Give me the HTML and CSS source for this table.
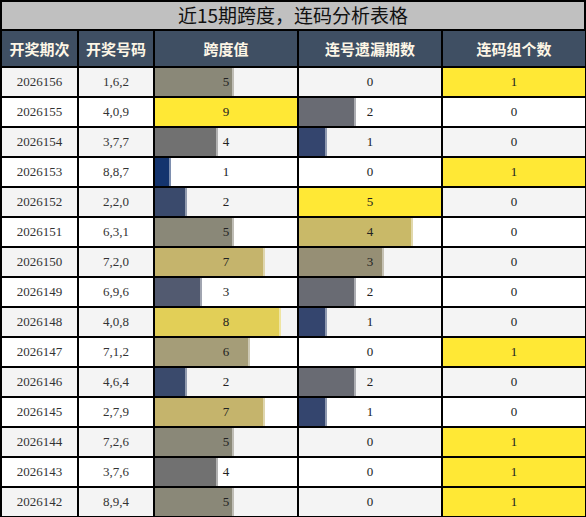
FILE: index.html
```html
<!DOCTYPE html>
<html lang="zh-CN">
<head>
  <meta charset="utf-8">
  <title>近15期跨度，连码分析表格</title>
  <link rel="stylesheet" href="styles.css">
</head>
<body>
  <div class="title">近15期跨度，连码分析表格</div>
  <table id="mainTable">
    <colgroup>
      <col class="c-issue">
      <col class="c-nums">
      <col class="c-bar">
      <col class="c-bar">
      <col class="c-bar">
    </colgroup>
    <thead>
      <tr>
        <th>开奖期次</th>
        <th>开奖号码</th>
        <th>跨度值</th>
        <th>连号遗漏期数</th>
        <th>连码组个数</th>
      </tr>
    </thead>
    <tbody>
      <tr>
        <td>2026156</td><td>1,6,2</td>
        <td class="barCell"><div class="bar s5" style="width:55.5%"></div><span class="val">5</span></td>
        <td class="barCell"><span class="val">0</span></td>
        <td class="barCell"><div class="bar hit" style="width:100%"></div><span class="val">1</span></td>
      </tr>
      <tr>
        <td>2026155</td><td>4,0,9</td>
        <td class="barCell"><div class="bar s9" style="width:100%"></div><span class="val">9</span></td>
        <td class="barCell"><div class="bar m2" style="width:40%"></div><span class="val">2</span></td>
        <td class="barCell"><span class="val">0</span></td>
      </tr>
      <tr>
        <td>2026154</td><td>3,7,7</td>
        <td class="barCell"><div class="bar s4" style="width:44.4%"></div><span class="val">4</span></td>
        <td class="barCell"><div class="bar m1" style="width:20%"></div><span class="val">1</span></td>
        <td class="barCell"><span class="val">0</span></td>
      </tr>
      <tr>
        <td>2026153</td><td>8,8,7</td>
        <td class="barCell"><div class="bar s1" style="width:11.1%"></div><span class="val">1</span></td>
        <td class="barCell"><span class="val">0</span></td>
        <td class="barCell"><div class="bar hit" style="width:100%"></div><span class="val">1</span></td>
      </tr>
      <tr>
        <td>2026152</td><td>2,2,0</td>
        <td class="barCell"><div class="bar s2" style="width:22.2%"></div><span class="val">2</span></td>
        <td class="barCell"><div class="bar m5" style="width:100%"></div><span class="val">5</span></td>
        <td class="barCell"><span class="val">0</span></td>
      </tr>
      <tr>
        <td>2026151</td><td>6,3,1</td>
        <td class="barCell"><div class="bar s5" style="width:55.5%"></div><span class="val">5</span></td>
        <td class="barCell"><div class="bar m4" style="width:80%"></div><span class="val">4</span></td>
        <td class="barCell"><span class="val">0</span></td>
      </tr>
      <tr>
        <td>2026150</td><td>7,2,0</td>
        <td class="barCell"><div class="bar s7" style="width:77.7%"></div><span class="val">7</span></td>
        <td class="barCell"><div class="bar m3" style="width:60%"></div><span class="val">3</span></td>
        <td class="barCell"><span class="val">0</span></td>
      </tr>
      <tr>
        <td>2026149</td><td>6,9,6</td>
        <td class="barCell"><div class="bar s3" style="width:33.3%"></div><span class="val">3</span></td>
        <td class="barCell"><div class="bar m2" style="width:40%"></div><span class="val">2</span></td>
        <td class="barCell"><span class="val">0</span></td>
      </tr>
      <tr>
        <td>2026148</td><td>4,0,8</td>
        <td class="barCell"><div class="bar s8" style="width:88.8%"></div><span class="val">8</span></td>
        <td class="barCell"><div class="bar m1" style="width:20%"></div><span class="val">1</span></td>
        <td class="barCell"><span class="val">0</span></td>
      </tr>
      <tr>
        <td>2026147</td><td>7,1,2</td>
        <td class="barCell"><div class="bar s6" style="width:66.6%"></div><span class="val">6</span></td>
        <td class="barCell"><span class="val">0</span></td>
        <td class="barCell"><div class="bar hit" style="width:100%"></div><span class="val">1</span></td>
      </tr>
      <tr>
        <td>2026146</td><td>4,6,4</td>
        <td class="barCell"><div class="bar s2" style="width:22.2%"></div><span class="val">2</span></td>
        <td class="barCell"><div class="bar m2" style="width:40%"></div><span class="val">2</span></td>
        <td class="barCell"><span class="val">0</span></td>
      </tr>
      <tr>
        <td>2026145</td><td>2,7,9</td>
        <td class="barCell"><div class="bar s7" style="width:77.7%"></div><span class="val">7</span></td>
        <td class="barCell"><div class="bar m1" style="width:20%"></div><span class="val">1</span></td>
        <td class="barCell"><span class="val">0</span></td>
      </tr>
      <tr>
        <td>2026144</td><td>7,2,6</td>
        <td class="barCell"><div class="bar s5" style="width:55.5%"></div><span class="val">5</span></td>
        <td class="barCell"><span class="val">0</span></td>
        <td class="barCell"><div class="bar hit" style="width:100%"></div><span class="val">1</span></td>
      </tr>
      <tr>
        <td>2026143</td><td>3,7,6</td>
        <td class="barCell"><div class="bar s4" style="width:44.4%"></div><span class="val">4</span></td>
        <td class="barCell"><span class="val">0</span></td>
        <td class="barCell"><div class="bar hit" style="width:100%"></div><span class="val">1</span></td>
      </tr>
      <tr>
        <td>2026142</td><td>8,9,4</td>
        <td class="barCell"><div class="bar s5" style="width:55.5%"></div><span class="val">5</span></td>
        <td class="barCell"><span class="val">0</span></td>
        <td class="barCell"><div class="bar hit" style="width:100%"></div><span class="val">1</span></td>
      </tr>
    </tbody>
  </table>
</body>
</html>
```

FILE: styles.css
```css
body {
    margin: 0;
    background-color: white;
    font-family: "Liberation Serif", "Noto Sans CJK SC", serif;
}

.title {
    width: 586px;
    box-sizing: border-box;
    height: 29px;
    border: 2px solid black;
    border-bottom: none;
    background-color: #c0c0c0;
    color: #111;
    text-align: center;
    font-family: "Noto Sans CJK SC", sans-serif;
    font-size: 19px;
    line-height: 26px;
}

#mainTable {
    width: 586px;
    border-collapse: collapse;
    table-layout: fixed;
}

.c-issue { width: 77px; }
.c-nums { width: 76px; }
.c-bar { width: 144px; }

#mainTable th, #mainTable td {
    border: 2px solid black;
    padding: 0;
    text-align: center;
}

#mainTable th {
    height: 35px;
    background-color: #3f4f63;
    color: #fdf6e6;
    font-family: "Noto Sans CJK SC", sans-serif;
    font-weight: bold;
    font-size: 15px;
}

#mainTable td {
    height: 28px;
    font-size: 13px;
    color: #333;
}

tbody tr:nth-child(odd) td {
    background-color: #f4f4f4;
}

tbody tr:nth-child(even) td {
    background-color: white;
}

.barCell {
    position: relative;
}

.bar {
    position: absolute;
    left: 0;
    top: 0;
    bottom: 0;
    box-shadow: inset -2px 0 rgba(255, 255, 255, 0.45);
}

.val {
    position: relative;
    color: #222;
}

/* 跨度值 */
.s1 { background-color: #14346e; }
.s2 { background-color: #3a4a6c; }
.s3 { background-color: #525a70; }
.s4 { background-color: #717171; }
.s5 { background-color: #8a8878; }
.s6 { background-color: #a59d78; }
.s7 { background-color: #c5b46c; }
.s8 { background-color: #e2cf57; }
.s9 { background-color: #ffe835; }

/* 连号遗漏 */
.m1 { background-color: #34456e; }
.m2 { background-color: #696b73; }
.m3 { background-color: #968f75; }
.m4 { background-color: #c9b968; }
.m5 { background-color: #ffe835; }

.hit { background-color: #ffe835; box-shadow: none; }
.s9, .m5 { box-shadow: none; }
```
